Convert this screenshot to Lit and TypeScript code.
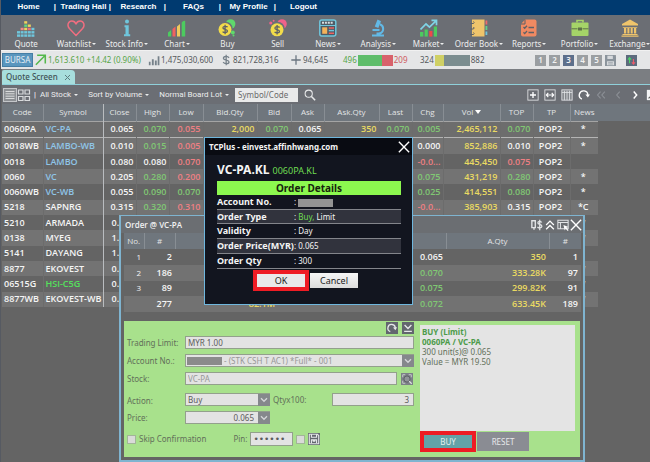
import { LitElement, html, css, svg, nothing } from "lit";
import { customElement } from "lit/decorators.js";
import { classMap } from "lit/directives/class-map.js";

const blocks = [
  ["#6fc6dc", "#6fc6dc"],
  ["#6fc6dc", "#6fc6dc", "#f08a8a"],
  ["#6fc6dc", "#6fc6dc", "#f0d35c", "#5fd97a", "#f0d35c"],
  ["#6fc6dc", "#6fc6dc", "#ee6f78", "#f0d35c"],
  ["#6fc6dc", "#6fc6dc", "#6fc6dc"],
];

const ICONS: Record<string, unknown> = {
  Quote: svg`${blocks.map((col, i) =>
    col.map((c, j) => svg`<rect x=${i * 3.6} y=${15.4 - j * 3.3} width="3" height="2.4" fill=${c}/>`))}`,
  Watchlist: svg`<path d="M9 16.4 2.4 9.5C-.4 6.200 1.400 2 4.900 2 7 2 8.400 3.500 9 5 9.600 3.500 11 2 13.100 2c3.500 0 5.300 4.200 2.500 7.500Z" fill="none" stroke="#f06e80" stroke-width="1.500" stroke-linejoin="round"/>`,
  "Stock Info": svg`<circle cx="9" cy="2.600" r="2" fill="#6fc6dc"/><path d="M6.500 6.300h4.200v9h1.500v2H6v-2h1.500v-7h-1Z" fill="#6fc6dc"/>`,
  Chart: svg`<path d="M0 13.500 3.200 11v6.500H0Z" fill="#4ccb5f"/><path d="M4.500 10 7.500 7.500v10h-3Z" fill="#f0625f"/><path d="M9 7.500 12 5v12.500H9Z" fill="#f0c95c"/><path d="M13.700 3.500Q15.500 1 17.200 2v15.500h-3.500Z" fill="#4ccb5f"/>`,
  Buy: svg`<circle cx="12.600" cy="5" r="4.800" fill="#5fd96c"/><circle cx="7.500" cy="10" r="7.300" fill="#6c7077"/><circle cx="7" cy="10.500" r="6.500" fill="#f2dc4a"/><circle cx="14.800" cy="13.500" r="2" fill="#5fd96c"/><circle cx="15.500" cy="16.600" r="1" fill="#5fd96c"/><path d="M9.600 8.200C8.500 6.800 4.800 7 4.900 8.900c.1 1.900 4.600 1.100 4.600 3.200 0 1.900-3.700 2-4.900.5M7.100 5.800v9.400" fill="none" stroke="#5d6167" stroke-width="1.300"/>`,
  Sell: svg`<circle cx="13" cy="5" r="4.800" fill="#f0628a"/><circle cx="1.800" cy="4" r="1.600" fill="#f0628a"/><circle cx="4.600" cy="1.800" r="1" fill="#f0628a"/><circle cx="8.500" cy="10" r="7.300" fill="#6c7077"/><circle cx="8" cy="10.800" r="6.500" fill="#f2dc4a"/><path d="M10.600 8.500C9.500 7.100 5.800 7.300 5.900 9.200c.1 1.900 4.600 1.100 4.600 3.200 0 1.900-3.700 2-4.900.5M8.100 6.100v9.400" fill="none" stroke="#5d6167" stroke-width="1.300"/>`,
  News: svg`<rect x=".8" y="1" width="16" height="16" rx="2" fill="#4f5b66" stroke="#6fc6dc" stroke-width="1.500"/><path d="M3 3.800h11.500" stroke="#d7dde0" stroke-width="2" stroke-dasharray="2 .9"/><path d="M1 6.500h16" stroke="#6fc6dc"/><rect x="3.200" y="8.300" width="5" height="6.500" fill="#f3b25a"/><path d="M9.800 9h5.200M9.800 14.200h5.200" stroke="#f0625f" stroke-width="1.400"/><path d="M9.800 11.600h5.200" stroke="#6fc6dc" stroke-width="1.400"/>`,
  Analysis: svg`<path d="M8.500.5 12 2.200 9.300 9 5.800 7.500Z" fill="#62b9e6"/><path d="M11 5.200c4.300 1.500 4.300 8.300-.5 9.300M3.500 11h7M3 16.500h12" fill="none" stroke="#62b9e6" stroke-width="2"/><path d="M7.500 13.500h4v3h-4Z" fill="#62b9e6"/>`,
  Market: svg`<path d="M0 13h3.300v4.600H0Z" fill="#4ccb5f"/><path d="M4.600 10.500h3.200v7.100H4.600Z" fill="#4ccb5f"/><path d="M9.200 12h3.200v5.600H9.200Z" fill="#f0484a"/><path d="M13.800 7.500H17v10.100h-3.200Z" fill="#4ccb5f"/><path d="M.5 10.500 6 5l3.500 3.200L16 1.800M11.500 1.300h5v5" fill="none" stroke="#7fd4e6" stroke-width="1.700"/>`,
  "Order Book": svg`<rect x="2" y=".5" width="12.500" height="17" fill="#efc46b"/><path d="M15.500 1.500h1.800v4h-1.800Z" fill="#ef6a6a"/><path d="M15.500 7h1.800v4h-1.800Z" fill="#62d08a"/><path d="M15.500 12.500h1.800v3.500h-1.800Z" fill="#6fc6dc"/><path d="M.5 4.500h3a1.300 1.300 0 0 0 0-2M.5 10h3a1.300 1.300 0 0 0 0-2M.5 15.500h3a1.300 1.300 0 0 0 0-2" fill="none" stroke="#5d6167" stroke-width="1"/>`,
  Reports: svg`<path d="M5 .5h9.500a2 2 0 0 1 2 2v13a2 2 0 0 1-2 2H3a2 2 0 0 1-2-2V5Z" fill="#f08a62"/><path d="M5 .5V5H1" fill="none" stroke="#5d6167"/><path d="m3.500 8 1.200 1.300L7 6.800m-3.500 6.500 1.200 1.300L7 12M8.500 8.500h5.500M8.500 13.500h5.500" fill="none" stroke="#5d6167" stroke-width="1.300"/>`,
  Portfolio: svg`<path d="M6 3.500v-2h6v2" fill="none" stroke="#a5d468" stroke-width="1.600"/><rect x=".5" y="3.500" width="17" height="13.500" rx="1" fill="#a5d468"/><path d="M.5 9.800h6m5 0h6" stroke="#5d7148"/><rect x="7" y="8.500" width="4" height="3" fill="#5d7148"/>`,
  Exchange: svg`<path d="M9 .5 17 5v1.500H1V5ZM1.800 8h14.400v.8H1.800ZM3 9h2.200v5.500H3Zm3.400 0h2v5.500h-2Zm3.300 0h2v5.500h-2ZM13 9h2.200v5.500H13ZM1.500 15h15v.9h-15ZM.5 16.500h17v1.200H.5Z" fill="#efc46b"/>`,
};

const glyph = (name: string) => {
  const shapes: Record<string, unknown> = {
    list: svg`<rect x=".5" y=".5" width="13" height="13" fill="#8d9094" stroke="#c4c6c9"/><path d="M2.500 3.500h9M2.500 5.800h9M2.500 8.200h9M2.500 10.500h9" stroke="#eceded" stroke-width=".8"/>`,
    grid: svg`<path d="M1.500 2h4.500v4H1.500ZM8 2h4.500v4H8ZM1.500 8.500h4.500v4H1.500ZM8 8.500h4.500v4H8Z" fill="none" stroke="#d8dadc" stroke-width="1.200"/>`,
    search: svg`<circle cx="5.500" cy="5.500" r="4.200" fill="none" stroke="#e8e9ea" stroke-width="1.200"/><path d="m8.700 8.700 4.300 4.500" stroke="#e8e9ea" stroke-width="1.800"/>`,
    plus: svg`<rect x="1" y="1" width="12" height="12" fill="none" stroke="#e2e4e6"/><path d="M7 3.500v7M3.500 7h7" stroke="#fff" stroke-width="1.600"/>`,
    fit: svg`<rect x="1" y="1" width="12" height="12" fill="none" stroke="#e2e4e6"/><path d="M3 7h8M5 4.500 2.700 7 5 9.500M9 4.500 11.300 7 9 9.500" fill="none" stroke="#fff" stroke-width="1.300"/>`,
    columns: svg`<rect x="1" y="1" width="12" height="12" fill="#83878b" stroke="#e2e4e6"/><path d="M1 4h12M4 2v11M7 2v11M10 2v11" stroke="#e2e4e6"/>`,
    refresh: svg`<path d="M4.500 11.800a5 5 0 1 1 7-4.600" fill="none" stroke="#fff" stroke-width="1.600"/><path d="m8.600 6.500 2.900 3.500L14 6.300Z" fill="#fff"/>`,
    first: svg`<path d="M6.500 3 3 7l3.500 4M11.500 3 8 7l3.500 4" fill="none" stroke="#8c9096" stroke-width="1.300"/>`,
    prev: svg`<path d="M9 3 5.500 7 9 11" fill="none" stroke="#8c9096" stroke-width="1.300"/>`,
    next: svg`<path d="M5.500 3 9 7l-3.500 4" fill="none" stroke="#fff" stroke-width="1.700"/>`,
    expand: svg`<path d="M1 1h13v12H1Z" fill="#f2f3f4"/><path d="m3 11 8-8" fill="none" stroke="#555" stroke-width="1.200"/>`,
    up: svg`<path d="m1 12.500 11-11M2.500 1.500H12V11" fill="none" stroke="#55b84c" stroke-width="1.800"/>`,
    bars: svg`<path d="M1 9h2v4H1ZM4.500 6h2.200v7H4.500ZM8 7.500h2.200V13H8ZM11.300 2.500h2V13h-2Z" fill="#76818a"/>`,
    dollar: svg`<path d="M10.500 4.500C9 1.800 4 2.500 4 5c0 2.800 6.500 1.500 6.500 4.200 0 2.400-5 3-6.800.3M7.200.8v12.400" fill="none" stroke="#76818a" stroke-width="1.500"/>`,
    cross: svg`<path d="M7 1.500v11M1.500 7h11" stroke="#6b7680" stroke-width="1.500"/>`,
    disk: svg`<path d="M0 0h11.500L14 2.500V14H0Z" fill="#8b949c"/><path d="M3 1h7v4H3ZM2.500 8h9v5h-9Z" fill="#d6d9dc"/><path d="M4 9.700h6M4 11.500h6" stroke="#8b949c" stroke-width=".8"/>`,
    save: svg`<path d="M1.500 1.500h9.500l1.500 1.500v9.500h-11Z" fill="none" stroke="currentColor" stroke-width="1.300"/><path d="M4 1.500v3.500h6V1.500M4 12V8h6v4M5.500 9.500h3" fill="none" stroke="currentColor" stroke-width="1.300"/>`,
    swap: svg`<path d="M0 0h14v14H0Z" fill="#5d6b7d"/><path d="M4.500 10.500v-6M2.500 6l2-2.500 2 2.500" fill="none" stroke="#4fd36a" stroke-width="1.400"/><path d="M9.500 5v6m-2-1.800 2 2.500 2-2.500" fill="none" stroke="#ee5a6a" stroke-width="1.400"/>`,
    quoteDollar: svg`<path d="M1 2h4v8H1ZM3.500 10v2.500" fill="none" stroke="#e2e4e6" stroke-width="1.600"/><path d="M12.500 4C11.500 2 7.800 2.300 8 4.500c.2 2.200 4.700 1.500 4.700 4 0 2.300-4 2.700-5.200.7M10.200 1v12" fill="none" stroke="#e2e4e6" stroke-width="1.500"/>`,
    collapse: svg`<path d="M2.500 7 7 2.500 11.500 7M2.500 12 7 7.500l4.500 4.500" fill="none" stroke="#fff" stroke-width="1.500"/>`,
    dock: svg`<path d="M1 1.500h12v10H1ZM1 4h12M4 4v7.500" fill="none" stroke="#e2e4e6" stroke-width="1.200"/><path d="m7.500 7 6 2.300-2.500.9 2.500 2.800-1 .9L10 11.200l-.9 2.300Z" fill="#fff"/>`,
    close: svg`<path d="m1 1 12 12M13 1 1 13" stroke="#fff" stroke-width="1.600"/>`,
    chevron: svg`<path d="M0 0h14v14H0Z" fill="#85888c"/><path d="m3.500 5 3.500 3.500L10.500 5" fill="none" stroke="#d5d7d9" stroke-width="1.500"/>`,
    reload: svg`<path d="M0 0h14v14H0Z" fill="#62666e"/><path d="M5 11.200a4.300 4.300 0 1 1 5.800-4" fill="none" stroke="#e6e8ea" stroke-width="1.500"/><path d="m8.200 6.500 2.700 3L13 6.200Z" fill="#e6e8ea"/>`,
    download: svg`<path d="M0 0h14v14H0Z" fill="#62666e"/><path d="m3 3.500 4 4 4-4M2.500 11h9" fill="none" stroke="#e6e8ea" stroke-width="1.600"/>`,
    find: svg`<path d="M0 0h14v14H0Z" fill="#7c8087"/><path d="M2 5V2h3m4 0h3v3M2 9v3h3" fill="none" stroke="#cfd2d4"/><circle cx="7" cy="7" r="3.600" fill="#8f9398" stroke="#55595f"/><path d="m9.500 9.500 3 3" stroke="#dfe1e3" stroke-width="1.500"/>`,
  };
  return html`<svg class="glyph" viewBox="0 0 14 14" aria-hidden="true">${shapes[name]}</svg>`;
};

const shared = css`
  :host { display: block; font: 8px/10px "Noto Sans", "Open Sans", sans-serif; color: #eceded; }
  * { box-sizing: border-box; }
  a { color: inherit; text-decoration: none; }
  button, input, select { font: inherit; color: inherit; margin: 0; padding: 0; border: 0; border-radius: 0; background: none; }
  .glyph { display: block; width: 12px; height: 12px; flex: none; }
  table { border-collapse: collapse; table-layout: fixed; }
  th, td { padding: 0; font-weight: inherit; white-space: nowrap; overflow: hidden; }
  .up { color: #80c773; }
  .down { color: #ee7f83; }
  .qty { color: #eada62; }
  .link { color: #8fc5e8; }
`;

@customElement("site-nav")
class SiteNav extends LitElement {
  static styles = [shared, css`
    nav { display: flex; height: 15px; background: #003a70; color: #fff; font: bold 8px/14px "Liberation Sans", sans-serif; }
    a { position: relative; width: 55px; text-align: center; white-space: nowrap; }
    a:not(:last-child)::after { content: "|"; position: absolute; right: 0; }
  `];
  render() {
    return html`<nav>${["Home", "Trading Hall", "Research", "FAQs", "My Profile", "Logout"].map((t) => html`<a href="#">${t}</a>`)}</nav>`;
  }
}

@customElement("tool-ribbon")
class ToolRibbon extends LitElement {
  static styles = [shared, css`
    .ribbon { overflow: hidden; background: #6b6e74; }
    .items { display: grid; grid-template-columns: repeat(13, 1fr); margin-right: -5px; height: 35px; }
    button { display: flex; flex-direction: column; align-items: center; gap: 2px; padding-top: 4px; white-space: nowrap; }
    .icon { width: 18px; height: 18px; }
    .menu::after { content: ""; display: inline-block; margin: 0 0 2px 1px; border: 2px solid transparent; border-top-color: currentColor; border-bottom: 0; }
  `];
  render() {
    return html`<div class="ribbon"><div class="items">${Object.keys(ICONS).map((n) => html`
      <button><svg class="icon" viewBox="0 0 18 18" aria-hidden="true">${ICONS[n]}</svg>
      <span class=${classMap({ menu: !["Quote", "Buy", "Sell"].includes(n) })}>${n}</span></button>`)}</div></div>`;
  }
}

@customElement("market-strip")
class MarketStrip extends LitElement {
  static styles = [shared, css`
    .strip { display: flex; align-items: center; height: 19px; padding: 0 13px 0 1px; background: #e5e6e7; color: #55595c; border-top: 1px solid #f1f1f1; }
    .bursa { width: 31px; height: 14px; background: #5a96be; border: 1px solid #457ea5; color: #e4eef5; margin-right: 2px; }
    .stat { display: flex; align-items: center; gap: 1px; white-space: nowrap; }
    .rise { width: 113px; color: #55a548; }
    .volume { width: 72px; }
    .value { width: 70px; }
    .trades { width: 53px; }
    .breadth { width: 77px; }
    .fall { color: #cf5a60; }
    .gain { color: #55a548; }
    .bar { display: flex; width: 35px; height: 11px; }
    .pages { display: flex; gap: 3px; margin-left: auto; }
    .page { width: 11px; height: 11px; background: #9b9fa2; color: #f2f2f2; font-weight: 600; }
    .page .glyph { width: 11px; height: 11px; }
    .current { background: #5d6f8b; }
    .last { margin-left: 7px; }
    .g { background: #5fbd6a; } .r { background: #d8626b; } .y { background: #cfd065; } .s { background: #7b8d8f; }
  `];
  bar(parts: [string, number][]) {
    return html`<span class="bar">${parts.map(([c, n]) => html`<span class=${c} style="flex-grow:${n}"></span>`)}</span>`;
  }
  render() {
    return html`<div class="strip">
      <button class="bursa">BURSA</button>
      <span class="stat rise">${glyph("up")}1,613.610 +14.42 (0.90%)</span>
      <span class="stat volume">${glyph("bars")}1,475,030,600</span>
      <span class="stat value">${glyph("dollar")}821,728,316</span>
      <span class="stat trades">${glyph("cross")}94,645</span>
      <span class="stat breadth"><span class="gain">496</span>${this.bar([["g", 24], ["r", 11]])}<span class="fall">209</span></span>
      <span class="stat">324${this.bar([["y", 9], ["s", 25]])}882</span>
      <span class="pages">${[1, 2, 3, 4, 5].map((n) => html`<button class=${classMap({ page: true, current: n === 3 })}>${n}</button>`)}
        <button class="page" aria-label="Save">${glyph("disk")}</button>
        <button class="page last" aria-label="Swap">${glyph("swap")}</button></span>
    </div>`;
  }
}

type Row = [string, string, string, ...string[]];
const ROWS: Row[] = [
  ["0060PA", "VC-PA", "0.065", "+0.070", "-0.055", "q2,000", "+0.070", "0.065", "q350", "+0.070", "+0.005", "q2,465,112", "+0.070", "POP2", "*"],
  ["0018WB", "LAMBO-WB", "0.010", "+0.015", "-0.005", "", "", "", "", "", "0.000", "q852,886", "0.010", "POP2", "*"],
  ["0018", "LAMBO", "0.080", "0.080", "-0.070", "", "", "", "", "", "--0.0...", "q445,450", "-0.075", "POP2", ""],
  ["0060", "VC", "0.205", "+0.280", "-0.200", "", "", "", "", "", "+0.075", "q431,219", "+0.280", "POP2", "*"],
  ["0060WB", "VC-WB", "0.055", "+0.090", "+0.070", "", "", "", "", "", "+0.025", "q414,551", "+0.080", "POP2", "*"],
  ["5218", "SAPNRG", "0.315", "+0.320", "-0.310", "", "", "", "", "", "--0.0...", "q385,903", "0.315", "POP2", "*C"],
  ["5210", "ARMADA", "0.", "", "", "", "", "", "", "", "", "", "", "", "*"],
  ["0138", "MYEG", "1.", "", "", "", "", "", "", "", "", "", "", "", "*"],
  ["5141", "DAYANG", "1.", "", "", "", "", "", "", "", "", "", "", "", ""],
  ["8877", "EKOVEST", "0.", "", "", "", "", "", "", "", "", "", "", "", "*"],
  ["06515G", "HSI-C5G", "0.", "", "", "", "", "", "", "", "", "", "", "", "*"],
  ["8877WB", "EKOVEST-WB", "0.", "", "", "", "", "", "", "", "", "", "", "", "*"],
];
const HEADS: [string, number][] = [["Code", 41], ["Symbol", 60], ["Close", 33], ["High", 33], ["Low", 34], ["Bid.Qty", 54], ["Bid", 34], ["Ask", 33], ["Ask.Qty", 55], ["Last", 33], ["Chg", 31], ["Vol", 57], ["TOP", 33], ["TP", 37], ["News", 28]];
const tone = (v: string) => ({ up: v[0] === "+", down: v[0] === "-", qty: v[0] === "q" });
const bare = (v: string) => v.replace(/^[+\-q]/, "");

@customElement("quote-screen")
class QuoteScreen extends LitElement {
  static styles = [shared, css`
    .tabs { display: flex; align-items: flex-end; height: 16px; background: #7b7e82; border-bottom: 1px solid #8fd0da; }
    .tab { display: flex; align-items: center; gap: 7px; height: 14px; padding: 0 5px 0 4px; background: #a7dedd; color: #3f5154; border-radius: 2px 4px 0 0; font-weight: 500; }
    .x { width: 5px; height: 5px; }
    .tools { display: flex; align-items: center; height: 19px; padding: 0 0 0 1px; background: #6b6e74; white-space: nowrap; overflow: hidden; font-family: Roboto, "Noto Sans", sans-serif; }
    .tools button { display: flex; align-items: center; gap: 3px; }
    .tools .big .glyph { width: 14px; height: 14px; }
    .caret::after { content: ""; border: 2px solid transparent; border-top-color: currentColor; border-bottom: 0; }
    .sep { margin: 0 4px 0 3px; color: #fff; }
    .menu { margin-right: 10px; }
    input { width: 63px; height: 14px; margin: 0 6px; padding: 0 3px; background: #e9eaea; color: #555; font-family: "Noto Sans", sans-serif; }
    input::placeholder { color: #6a6a6a; opacity: 1; }
    .actions { display: flex; gap: 5px; margin: 0 -8px 0 auto; }
    .sheet { background: linear-gradient(#6f767d, #6f767d) 0 0 / 100% 17px no-repeat; }
    table { width: 596px; height: 203px; font: 600 9px/10px "Open Sans", "Noto Sans", sans-serif; text-align: right; color: #f5f5f5; }
    thead tr { height: 17px; font-weight: 400; font-size: 8px; text-align: center; color: #e2e4e5; }
    th + th { border-left: 1px solid #888e94; }
    .vol::after { content: ""; display: inline-block; margin: 0 0 1px 2px; border: 3px solid transparent; border-top: 4px solid #fff; border-bottom: 0; }
    tbody tr:nth-child(even) { background: #737373; }
    tbody tr:nth-child(odd) { background: #646464; }
    tbody tr:first-child { background: #6d6d6d; border-top: 1px solid #a4a4a4; border-bottom: 1px solid #b4b4b4; }
    td { padding-right: 2px; }
    td + td { border-left: 1px solid #6c6c6c; }
    .code, .symbol { text-align: left; padding-left: 2px; }
    .short { text-align: left; padding-left: 8px; }
    th:nth-child(3), tbody td:nth-child(3) { border-left: 1px solid #b9bcbf; }
    td:nth-child(n + 14) { text-align: center; }
    .bright { color: #54e05c; }
  `];
  render() {
    return html`
      <div class="tabs"><div class="tab">Quote Screen <svg class="x" viewBox="0 0 5 5"><path d="m0 0 5 5M5 0 0 5" stroke="#5d7d80"/></svg></div></div>
      <div class="tools">
        <button class="big" aria-label="List view">${glyph("list")}</button>
        <button class="big" aria-label="Grid view">${glyph("grid")}</button><span class="sep">|</span>
        ${["All Stock", "Sort by Volume", "Normal Board Lot"].map((t, i) => html`<button class=${classMap({ caret: true, menu: i < 2 })}>${t}</button>`)}
        <input placeholder="Symbol/Code" aria-label="Symbol or code">
        <button aria-label="Search">${glyph("search")}</button>
        <div class="actions">${["plus", "fit", "columns", "refresh", "first", "prev", "next", "expand"].map((n) => html`<button aria-label=${n}>${glyph(n)}</button>`)}</div>
      </div>
      <div class="sheet"><table>
        <colgroup>${HEADS.map(([, w]) => html`<col style="width:${w}px">`)}</colgroup>
        <thead><tr>${HEADS.map(([t]) => html`<th class=${t === "Vol" ? "vol" : nothing}>${t}</th>`)}</tr></thead>
        <tbody>${ROWS.map((r, i) => html`<tr>${r.map((v, c) => c < 2
          ? html`<td class=${classMap({ code: c === 0, symbol: c === 1, link: c === 1 && i < 5, bright: c === 1 && i === 10 })}>${v}</td>`
          : html`<td class=${classMap({ ...tone(v), short: c === 2 && v.length < 3 })}>${bare(v)}</td>`)}</tr>`)}</tbody>
      </table></div>`;
  }
}

@customElement("order-window")
class OrderWindow extends LitElement {
  static styles = [shared, css`
    section { border: 1px solid #7fb4d0; border-width: 1px 2px 2px; background: #646464; padding: 0 3px 3px; }
    header { display: flex; align-items: center; height: 17px; margin: 0 -3px; padding: 0 1px 0 4px; background: #6b6e72; }
    h2 { flex: 1; margin: 0; font: 600 8px/12px "Open Sans", sans-serif; color: #f2f2f2; }
    header button { margin-left: 1px; }
    table { width: 100%; height: 79px; font: 600 9px/10px "Open Sans", "Noto Sans", sans-serif; text-align: right; color: #f5f5f5; }
    thead tr { height: 16px; background: #6f767d; font-weight: 400; font-size: 8px; text-align: center; color: #e2e4e5; }
    th + th { border-left: 1px solid #888e94; }
    tbody tr:nth-child(even) { background: #727272; }
    td { padding-right: 3px; }
    td:first-child { font-weight: 400; font-size: 8px; }
    .form { display: grid; grid-template-columns: minmax(0, 1fr) 155px; gap: 6px; margin-top: 9px; padding: 0 5px 5px 3px; background: #a8e18c; color: #62705a; }
    .fields { display: grid; row-gap: 5px; align-content: start; }
    .corner { display: flex; justify-content: flex-end; gap: 4px; height: 10px; padding-top: 1px; }
    .line { display: grid; grid-template-columns: 58px minmax(0, 1fr); align-items: center; height: 13px; }
    .roomy { height: 16px; align-items: end; }
    .with-find { display: grid; grid-template-columns: minmax(0, 1fr) 12px; gap: 4px; padding-right: 1px; align-items: center; }
    .pair { display: grid; grid-template-columns: 85px 60px minmax(0, 1fr); gap: 1px; align-items: center; }
    .box { width: 100%; height: 13px; padding: 0 2px; border: 1px solid #93a08c; background: #e3e3e3; color: #5b5b5b; font-size: 8px; }
    .pale { color: #979797; }
    .num { text-align: right; padding-right: 4px; }
    .pick { display: grid; grid-template-columns: minmax(0, 1fr) 12px; align-items: center; }
    .pick select { grid-area: 1 / 1 / 2 / 3; appearance: none; }
    .pick .glyph { grid-area: 1 / 2; z-index: 1; pointer-events: none; }
    .mask { grid-area: 1 / 1; z-index: 1; width: 35px; height: 8px; margin-left: 2px; background: #8b8b8b; }
    .pick .after-mask { padding-left: 38px; }
    .pick .right { text-align: right; text-align-last: right; padding-right: 15px; }
    .foot { display: flex; align-items: center; gap: 3px; padding-top: 3px; }
    .foot label { white-space: nowrap; }
    .tick { appearance: none; width: 9px; height: 9px; border: 1px solid #a2b598; background: #d9dbd8; }
    .pin-label { margin-left: 24px; }
    .foot .pin { width: 43px; height: 14px; font: 9px/12px "DejaVu Sans", sans-serif; }
    .icon-btn { background: #62666e; color: #e6e8ea; }
    .note { height: 106px; margin: 4px 0 0; padding: 2px 2px; background: #e4e4e4; line-height: 10px; }
    .note strong { display: block; color: #4d9b4a; }
    .buttons { display: flex; align-items: center; gap: 1px; }
    .buy { width: 56px; height: 21px; border: 4px solid #ee1c24; background: #63a3a8; color: #e6f0f0; }
    .reset { width: 52px; height: 19px; background: #8a8c93; color: #e8e8ea; }
  `];
  render() {
    const depth = [
      ["1", "2", "", "", "", "0.065", "q350", "1"],
      ["2", "186", "", "", "", "+0.070", "q333.28K", "97"],
      ["3", "89", "", "", "", "+0.075", "q299.82K", "91"],
      ["", "277", "q82.1M", "", "", "+0.072", "q633.45K", "189"],
    ];
    return html`<section>
      <header><h2>Order @ VC-PA</h2>${["quoteDollar", "collapse", "dock", "close"].map((n) => html`<button aria-label=${n}>${glyph(n)}</button>`)}</header>
      <table>
        <colgroup>${[20, 31, 103, 50, 50, 68, 103, 32].map((w) => html`<col style="width:${w}px">`)}</colgroup>
        <thead><tr>${["No.", "#", "", "", "", "", "A.Qty", "#"].map((t) => html`<th>${t}</th>`)}</tr></thead>
        <tbody>${depth.map((r) => html`<tr>${r.map((v) => html`<td class=${classMap(tone(v))}>${bare(v)}</td>`)}</tr>`)}</tbody>
      </table>
      <div class="form">
        <div class="fields">
          <div class="corner"><button aria-label="Reload">${glyph("reload")}</button><button aria-label="Collapse form">${glyph("download")}</button></div>
          <div class="line"><label for="limit">Trading Limit:</label><input id="limit" class="box" value="MYR 1.00"></div>
          <div class="line"><label for="account">Account No.:</label><span class="pick"><select id="account" class="box pale after-mask"><option>- (STK CSH T AC1) *Full* - 001</option></select><span class="mask"></span>${glyph("chevron")}</span></div>
          <div class="line"><label for="stock">Stock:</label><span class="with-find"><input id="stock" class="box pale" value="VC-PA"><button aria-label="Find stock">${glyph("find")}</button></span></div>
          <div class="line roomy"><label for="action">Action:</label><span class="pair"><span class="pick"><select id="action" class="box"><option>Buy</option></select>${glyph("chevron")}</span><label for="qty">&nbsp;Qtyx100:</label><input id="qty" class="box num" value="3"></span></div>
          <div class="line"><label for="price">Price:</label><span class="pair"><span class="pick"><select id="price" class="box right"><option>0.065</option></select>${glyph("chevron")}</span></span></div>
          <div class="foot"><input id="skip" class="tick" type="checkbox"><label for="skip">Skip Confirmation</label>
            <label class="pin-label" for="pin">Pin:</label><input id="pin" class="box pin" type="password" value="123456">
            <input class="tick" type="checkbox" aria-label="Remember pin"><button class="icon-btn" aria-label="Save pin">${glyph("save")}</button></div>
        </div>
        <div>
          <p class="note"><strong>BUY (Limit)</strong><strong>0060PA / VC-PA</strong>300 unit(s)@ 0.065<br>Value = MYR 19.50</p>
          <div class="buttons"><button class="buy">BUY</button><button class="reset">RESET</button></div>
        </div>
      </div>
    </section>`;
  }
}

@customElement("confirm-dialog")
class ConfirmDialog extends LitElement {
  static styles = [shared, css`
    section { height: 168px; border: 1px solid #6fb7de; background: #12151f; color: #f4f4f4; }
    header { display: flex; align-items: center; justify-content: space-between; height: 17px; padding: 0 2px 0 4px; background: #090b12; font-weight: 700; }
    .body { padding: 7px 11px 0 12px; }
    h2 { margin: 0 0 2px; font: 700 12px/16px "Noto Sans", sans-serif; }
    h2 span { font-weight: 400; font-size: 9px; color: #6fdc52; }
    h3 { margin: 0; height: 14px; background: #8cf84f; color: #16240c; text-align: center; font: 700 10px/14px "Noto Sans", sans-serif; }
    table { width: 100%; height: 74px; font-size: 8px; }
    th { width: 77px; text-align: left; font-weight: 700; font-size: 9px; overflow: visible; }
    tr { border-bottom: 1px solid #83858b; }
    tr:nth-child(even) { background: #31333d; }
    .mask { display: inline-block; width: 35px; height: 8px; background: #949494; vertical-align: middle; }
    .buy { color: #6fdc52; }
    .buttons { display: flex; align-items: center; gap: 1px; margin: 1px 0 0 36px; color: #222; font-size: 9px; }
    .buttons button { width: 48px; height: 15px; background: linear-gradient(#f6f6f6, #dcdcdc); }
    .buttons .ok { width: 56px; height: 21px; background: #e9e9e9; border: 4px solid #ee1c24; }
  `];
  render() {
    const rows: [string, unknown][] = [
      ["Account No.", html`<span class="mask"></span>`],
      ["Order Type", html`<span class="buy">Buy,</span> Limit`],
      ["Validity", "Day"],
      ["Order Price(MYR)", "0.065"],
      ["Order Qty", "300"],
    ];
    return html`<section role="dialog" aria-label="Order confirmation">
      <header>TCPlus - einvest.affinhwang.com <button aria-label="Close">${glyph("close")}</button></header>
      <div class="body">
        <h2>VC-PA.KL <span>0060PA.KL</span></h2>
        <h3>Order Details</h3>
        <table>${rows.map(([k, v]) => html`<tr><th>${k}</th><td>: ${v}</td></tr>`)}</table>
        <div class="buttons"><button class="ok">OK</button><button>Cancel</button></div>
      </div>
    </section>`;
  }
}

@customElement("app-root")
class AppRoot extends LitElement {
  static styles = css`
    :host { display: block; position: relative; min-height: 100vh; box-sizing: border-box; background: #646464; border-left: 1px solid #565a62; overflow: hidden; }
    quote-screen { padding-left: 1px; }
    order-window { position: absolute; left: 118px; top: 215px; width: 466px; }
    confirm-dialog { position: absolute; left: 203px; top: 137px; width: 209px; }
  `;
  render() {
    return html`<site-nav></site-nav><tool-ribbon></tool-ribbon><market-strip></market-strip><quote-screen></quote-screen>
      <order-window></order-window><confirm-dialog></confirm-dialog>`;
  }
}
